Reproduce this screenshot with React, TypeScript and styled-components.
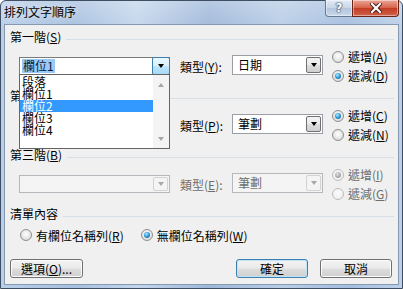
import React from 'react';
import styled, { createGlobalStyle } from 'styled-components';

const GlobalStyle = createGlobalStyle`
  html, body {
    margin: 0;
    padding: 0;
    background: #ffffff;
  }
  body {
    font-family: "Noto Sans CJK TC", "Liberation Sans", sans-serif;
    font-size: 12px;
    color: #000;
  }
  * {
    box-sizing: border-box;
  }
`;

const Window = styled.div`
  width: 403px;
  height: 289px;
  display: flex;
  flex-direction: column;
  border: 1px solid #3e4f63;
  border-radius: 6px 6px 0 0;
  padding: 0 3px 3px;
  background:
    linear-gradient(180deg, rgba(255, 255, 255, 0.25) 0%, rgba(255, 255, 255, 0) 30px),
    linear-gradient(90deg, #b9cfe8 0%, #a7c0df 18%, #c3d6ec 34%, #9fb8d9 52%, #b8cde6 70%, #a5bedf 86%, #bcd0e9 100%);
`;

const TitleBar = styled.div`
  height: 23px;
  display: flex;
  justify-content: space-between;
  align-items: flex-start;
`;

const Title = styled.div`
  padding-top: 4px;
  line-height: 14px;
  font-size: 12px;
  color: #000;
  text-shadow: 0 0 6px rgba(255, 255, 255, 0.7);
`;

const TitleButtons = styled.div`
  display: flex;
  margin-top: -1px;
`;

const CaptionButton = styled.div<{ $kind: 'help' | 'close' }>`
  height: 17px;
  width: ${p => (p.$kind === 'close' ? 47 : 28)}px;
  display: flex;
  align-items: center;
  justify-content: center;
  border: 1px solid ${p => (p.$kind === 'close' ? '#6b2418' : '#66778e')};
  border-top: none;
  border-radius: ${p => (p.$kind === 'close' ? '0 0 4px 0' : '0 0 0 4px')};
  margin-left: ${p => (p.$kind === 'close' ? -1 : 0)}px;
  box-shadow: inset 0 0 0 1px rgba(255, 255, 255, 0.45);
  background: ${p =>
    p.$kind === 'close'
      ? 'linear-gradient(180deg, #e9a897 0%, #d7634b 48%, #c33c25 52%, #d0614a 100%)'
      : 'linear-gradient(180deg, #e3ebf5 0%, #c9d7e8 48%, #b3c6de 52%, #c9d8eb 100%)'};
  color: #fff;
  font-family: "DejaVu Sans", sans-serif;
  font-weight: bold;
  font-size: 12px;
  line-height: 12px;
  text-shadow: 0 0 1px #33404f, 0 0 1px #33404f, 0 0 2px #33404f;
`;

const Client = styled.div`
  flex: 1;
  display: flex;
  flex-direction: column;
  background: #f0f0f0;
  border: 1px solid #8799b0;
  padding: 5px 4px 0 5px;
`;

const Group = styled.div`
  display: flex;
  flex-direction: column;
`;

const GroupHeader = styled.div`
  display: flex;
  align-items: flex-start;
  height: 14px;
`;

const GroupLabel = styled.span`
  line-height: 14px;
  white-space: nowrap;
`;

const GroupLine = styled.div`
  flex: 1;
  height: 1px;
  margin: 9px 0 0 5px;
  background: #d5dfe5;
`;

const Row = styled.div`
  display: flex;
  align-items: center;
  height: 38px;
  margin: 3px 0 4px 9px;
`;

const ComboWrap = styled.div`
  position: relative;
  width: 151px;
  height: 18px;
`;

const ComboBox = styled.div<{ $disabled?: boolean }>`
  display: flex;
  width: 100%;
  height: 100%;
  border: 1px solid ${p => (p.$disabled ? '#b5b9bd' : '#7a7a7a')};
  background: ${p => (p.$disabled ? '#f4f4f4' : '#ffffff')};
`;

const ComboText = styled.div`
  flex: 1;
  display: flex;
  align-items: center;
  padding-left: 2px;
`;

const Highlight = styled.span`
  background: #99c9f6;
  color: #0a1a33;
  line-height: 14px;
  padding: 0 1px;
`;

const DropButton = styled.div<{ $state: 'open' | 'normal' | 'disabled' }>`
  width: ${p => (p.$state === 'open' ? 18 : 15)}px;
  display: flex;
  align-items: center;
  justify-content: center;
  margin: ${p => (p.$state === 'open' ? '-1px -1px -1px 0' : '1px')};
  border: 1px solid
    ${p => (p.$state === 'open' ? '#3c7fb1' : p.$state === 'disabled' ? '#d2d2d2' : '#707070')};
  border-radius: 2px;
  background: ${p =>
    p.$state === 'open'
      ? 'linear-gradient(180deg, #eaf6fd 0%, #d9f0fc 48%, #bee6fd 52%, #a7d9f5 100%)'
      : p.$state === 'disabled'
      ? '#f4f4f4'
      : 'linear-gradient(180deg, #f2f2f2 0%, #ebebeb 48%, #dddddd 52%, #cfcfcf 100%)'};
`;

const Arrow = styled.span<{ $up?: boolean; $color?: string }>`
  width: 0;
  height: 0;
  border-left: 3.5px solid transparent;
  border-right: 3.5px solid transparent;
  ${p =>
    p.$up
      ? `border-bottom: 4px solid ${p.$color || '#000'};`
      : `border-top: 4px solid ${p.$color || '#000'};`}
`;

const DropList = styled.div`
  position: absolute;
  top: calc(100% - 1px);
  left: 0;
  width: 151px;
  height: 75px;
  display: flex;
  border: 1px solid #646464;
  background: #ffffff;
  z-index: 5;
`;

const ListItems = styled.div`
  flex: 1;
  padding-top: 1px;
`;

const ListItem = styled.div<{ $selected?: boolean }>`
  height: 12px;
  line-height: 12px;
  padding-left: 2px;
  white-space: nowrap;
  background: ${p => (p.$selected ? '#3399ff' : 'transparent')};
  color: ${p => (p.$selected ? '#ffffff' : '#000000')};
`;

const ScrollTrack = styled.div`
  width: 16px;
  display: flex;
  flex-direction: column;
  align-items: center;
  justify-content: space-between;
  padding: 8px 0 7px;
  background: #f4f4f4;
`;

const TypeLabel = styled.span<{ $disabled?: boolean }>`
  width: 52px;
  margin-left: 10px;
  white-space: nowrap;
  color: ${p => (p.$disabled ? '#6d6d6d' : '#000')};
`;

const Select = styled.div<{ $disabled?: boolean }>`
  width: 91px;
  height: 20px;
  display: flex;
  margin-bottom: 3px;
  border: 1px solid ${p => (p.$disabled ? '#b5b9bd' : '#9a9fa6')};
  background: ${p => (p.$disabled ? '#f4f4f4' : '#ffffff')};
  color: ${p => (p.$disabled ? '#6d6d6d' : '#000')};
`;

const SelectText = styled.div`
  flex: 1;
  padding-left: 5px;
  line-height: 17px;
`;

const RadioColumn = styled.div`
  display: flex;
  flex-direction: column;
  margin-left: 9px;
`;

const RadioItem = styled.label<{ $disabled?: boolean }>`
  display: flex;
  align-items: center;
  gap: 4px;
  height: 19px;
  white-space: nowrap;
  color: ${p => (p.$disabled ? '#6d6d6d' : '#000')};
`;

const RadioCircle = styled.span<{ $disabled?: boolean }>`
  width: 12px;
  height: 12px;
  flex: none;
  display: flex;
  align-items: center;
  justify-content: center;
  border-radius: 50%;
  border: 1px solid ${p => (p.$disabled ? '#bcbcbc' : '#8e8f8f')};
  background: ${p =>
    p.$disabled
      ? 'radial-gradient(circle at 50% 40%, #fbfbfb 0%, #ececec 100%)'
      : 'radial-gradient(circle at 50% 40%, #ffffff 0%, #e4e4e4 60%, #cfcfcf 100%)'};
`;

const RadioDot = styled.span<{ $disabled?: boolean }>`
  width: 6px;
  height: 6px;
  border-radius: 50%;
  background: ${p =>
    p.$disabled
      ? 'radial-gradient(circle at 40% 35%, #e0e0e0 0%, #a8a8a8 60%, #8a8a8a 100%)'
      : 'radial-gradient(circle at 40% 35%, #bdeeff 0%, #3ea6e2 40%, #0b4f86 100%)'};
`;

const ListRow = styled.div`
  display: flex;
  align-items: center;
  gap: 17px;
  height: 18px;
  margin: 5px 0 0 10px;
`;

const ButtonRow = styled.div`
  display: flex;
  gap: 12px;
  margin-top: 15px;
  padding-right: 2px;
`;

const Spacer = styled.div`
  flex: 1;
`;

const PushButton = styled.div<{ $default?: boolean; $width: number }>`
  width: ${p => p.$width}px;
  height: 19px;
  display: flex;
  align-items: center;
  justify-content: center;
  border: 1px solid ${p => (p.$default ? '#3c7fb1' : '#707070')};
  border-radius: 3px;
  box-shadow: inset 0 0 0 1px ${p => (p.$default ? '#bfe4f7' : '#fcfcfc')};
  background: linear-gradient(180deg, #f2f2f2 0%, #ebebeb 48%, #dddddd 52%, #cfcfcf 100%);
  line-height: 14px;
`;

const U = styled.span`
  text-decoration: underline;
`;

const Mn = ({ k }: { k: string }) => (
  <>
    (<U>{k}</U>)
  </>
);

const Radio = ({
  label,
  k,
  checked,
  disabled,
}: {
  label: string;
  k: string;
  checked?: boolean;
  disabled?: boolean;
}) => (
  <RadioItem $disabled={disabled}>
    <RadioCircle $disabled={disabled}>{checked && <RadioDot $disabled={disabled} />}</RadioCircle>
    <span>
      {label}
      <Mn k={k} />
    </span>
  </RadioItem>
);

const SortLevel = ({
  title,
  tk,
  typeKey,
  typeValue,
  up,
  down,
  ascending,
  disabled,
  children,
}: {
  title: string;
  tk: string;
  typeKey: string;
  typeValue: string;
  up: string;
  down: string;
  ascending: boolean;
  disabled?: boolean;
  children: React.ReactNode;
}) => (
  <Group>
    <GroupHeader>
      <GroupLabel>
        {title}
        <Mn k={tk} />
      </GroupLabel>
      <GroupLine />
    </GroupHeader>
    <Row>
      {children}
      <TypeLabel $disabled={disabled}>
        類型<Mn k={typeKey} />:
      </TypeLabel>
      <Select $disabled={disabled}>
        <SelectText>{typeValue}</SelectText>
        <DropButton $state={disabled ? 'disabled' : 'normal'}>
          <Arrow $color={disabled ? '#a8a8a8' : '#000'} />
        </DropButton>
      </Select>
      <RadioColumn>
        <Radio label="遞增" k={up} checked={ascending} disabled={disabled} />
        <Radio label="遞減" k={down} checked={!ascending} disabled={disabled} />
      </RadioColumn>
    </Row>
  </Group>
);

const fields = ['段落', '欄位1', '欄位2', '欄位3', '欄位4'];

export default function App() {
  return (
    <>
      <GlobalStyle />
      <Window>
        <TitleBar>
          <Title>排列文字順序</Title>
          <TitleButtons>
            <CaptionButton $kind="help">?</CaptionButton>
            <CaptionButton $kind="close">
              <svg width="12" height="10" viewBox="0 0 12 10">
                <path d="M2 1 L10 9 M10 1 L2 9" stroke="#3a1a14" strokeWidth="4" strokeLinecap="square" />
                <path d="M2 1 L10 9 M10 1 L2 9" stroke="#ffffff" strokeWidth="2.2" strokeLinecap="square" />
              </svg>
            </CaptionButton>
          </TitleButtons>
        </TitleBar>
        <Client>
          <SortLevel title="第一階" tk="S" typeKey="Y" typeValue="日期" up="A" down="D" ascending={false}>
            <ComboWrap>
              <ComboBox>
                <ComboText>
                  <Highlight>欄位1</Highlight>
                </ComboText>
                <DropButton $state="open">
                  <Arrow />
                </DropButton>
              </ComboBox>
              <DropList>
                <ListItems>
                  {fields.map(f => (
                    <ListItem key={f} $selected={f === '欄位2'}>
                      {f}
                    </ListItem>
                  ))}
                </ListItems>
                <ScrollTrack>
                  <Arrow $up $color="#a6a6a6" />
                  <Arrow $color="#a6a6a6" />
                </ScrollTrack>
              </DropList>
            </ComboWrap>
          </SortLevel>
          <SortLevel title="第二階" tk="T" typeKey="P" typeValue="筆劃" up="C" down="N" ascending>
            <ComboWrap>
              <ComboBox>
                <ComboText />
                <DropButton $state="normal">
                  <Arrow />
                </DropButton>
              </ComboBox>
            </ComboWrap>
          </SortLevel>
          <SortLevel title="第三階" tk="B" typeKey="E" typeValue="筆劃" up="I" down="G" ascending disabled>
            <ComboWrap>
              <ComboBox $disabled>
                <ComboText />
                <DropButton $state="disabled">
                  <Arrow $color="#a8a8a8" />
                </DropButton>
              </ComboBox>
            </ComboWrap>
          </SortLevel>
          <GroupHeader>
            <GroupLabel>清單內容</GroupLabel>
            <GroupLine />
          </GroupHeader>
          <ListRow>
            <Radio label="有欄位名稱列" k="R" />
            <Radio label="無欄位名稱列" k="W" checked />
          </ListRow>
          <ButtonRow>
            <PushButton $width={73}>
              選項<Mn k="O" />...
            </PushButton>
            <Spacer />
            <PushButton $width={72} $default>
              確定
            </PushButton>
            <PushButton $width={72}>取消</PushButton>
          </ButtonRow>
        </Client>
      </Window>
    </>
  );
}
